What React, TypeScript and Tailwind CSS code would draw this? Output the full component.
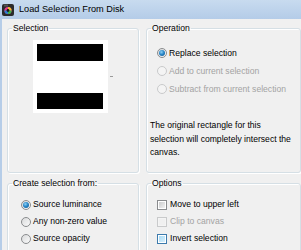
import React from "react";

const font = { fontFamily: '"Liberation Sans", Arial, sans-serif' };

const Radio = ({ checked, disabled }: { checked?: boolean; disabled?: boolean }) => (
	<div
		className={`w-[10px] h-[10px] rounded-full border flex items-center justify-center shrink-0 ${
			disabled
				? "border-[#c9cacb] bg-[#f4f4f4]"
				: "border-[#8a8c8e] bg-gradient-to-br from-[#d9dadb] to-[#fbfbfb]"
		}`}
	>
		{checked && (
			<div className="w-[6px] h-[6px] rounded-full bg-[radial-gradient(circle_at_40%_35%,#8fd0f5_0%,#2a88c8_45%,#0d4f8c_100%)]" />
		)}
	</div>
);

const Check = ({ disabled, hot }: { disabled?: boolean; hot?: boolean }) => (
	<div
		className={`w-[10px] h-[10px] border shrink-0 p-[1px] ${
			hot
				? "border-[#3d7bad] bg-white"
				: disabled
					? "border-[#c9cacb] bg-[#f4f4f4]"
					: "border-[#8a8c8e] bg-white"
		}`}
	>
		<div
			className={`w-full h-full ${
				hot
					? "bg-gradient-to-br from-[#a9dcf6] to-[#d8effb]"
					: disabled
						? "bg-[#f0f0f0]"
						: "bg-gradient-to-br from-[#cbcccd] to-[#f2f2f2]"
			}`}
		/>
	</div>
);

const Legend = ({ children }: { children: React.ReactNode }) => (
	<legend className="ml-[4px] px-[1px] leading-[12px] text-[8.6px] text-black">{children}</legend>
);

const box =
	"border border-[#d5dfe5] rounded-[3px] shadow-[inset_1px_1px_0_#ffffff,1px_1px_0_#ffffff] px-0 pb-0";

export default function App() {
	return (
		<div style={font} className="w-[301px] h-[250px] overflow-hidden bg-[#f0f0f0] flex flex-col">
			{/* title bar */}
			<div className="h-[19px] shrink-0 bg-gradient-to-b from-[#c8dbef] to-[#b4cce8] flex items-center pl-[2px] gap-[5px]">
				<svg width="12" height="12" viewBox="0 0 12 12">
					<rect x="0" y="0" width="12" height="12" rx="2" fill="#2b2b2b" />
					<rect x="2" y="0.5" width="4" height="2" fill="#555" />
					<circle cx="6" cy="6.5" r="3.6" fill="#e23a8a" />
					<path d="M6 6.5 L6 2.9 A3.6 3.6 0 0 1 9.6 6.5 Z" fill="#f2c12e" />
					<path d="M6 6.5 L9.6 6.5 A3.6 3.6 0 0 1 6 10.1 Z" fill="#3ab54a" />
					<path d="M6 6.5 L6 10.1 A3.6 3.6 0 0 1 2.4 6.5 Z" fill="#2a7fd4" />
					<circle cx="6" cy="6.5" r="1.4" fill="#1a1a1a" />
				</svg>
				<span className="text-[9.2px] text-black">Load Selection From Disk</span>
			</div>
			<div className="flex-1 border-l-2 border-[#b6cde8] pl-[5px]">
				<div className="grid grid-cols-[132px_155px] gap-x-[7px]">
					<fieldset className={`${box} mt-[3px] h-[151px]`}>
						<Legend>Selection</Legend>
						<div className="flex items-center mt-[6px] ml-[25px]">
							<div className="w-[75px] h-[73px] bg-white flex flex-col justify-between px-[4px] py-[4px]">
								<div className="h-[17px] w-[66px] bg-black" />
								<div className="h-[16px] w-[66px] bg-black" />
							</div>
							<div className="ml-[2px] w-[3px] h-[1px] bg-[#9a9a9a]" />
						</div>
					</fieldset>
					<fieldset className={`${box} mt-[3px] h-[151px]`}>
						<Legend>Operation</Legend>
						<div className="mt-[10px] pl-[10px] flex flex-col text-[8.6px]">
							<div className="h-[18px] flex items-center gap-[2px]">
								<Radio checked />
								<span className="text-black">Replace selection</span>
							</div>
							<div className="h-[18px] flex items-center gap-[2px]">
								<Radio disabled />
								<span className="text-[#a3a3a3]">Add to current selection</span>
							</div>
							<div className="h-[18px] flex items-center gap-[2px]">
								<Radio disabled />
								<span className="text-[#a3a3a3]">Subtract from current selection</span>
							</div>
						</div>
						<p className="mt-[21px] pl-[3px] pr-[2px] text-[8.6px] leading-[13.5px] text-black">
							The original rectangle for this
							<br />
							selection will completely intersect the
							<br />
							canvas.
						</p>
					</fieldset>
					<fieldset className={`${box} mt-[4px] h-[80px]`}>
						<Legend>Create selection from:</Legend>
						<div className="mt-[7px] pl-[13px] flex flex-col text-[8.6px] text-black">
							<div className="h-[17px] flex items-center gap-[2px]">
								<Radio checked />
								<span>Source luminance</span>
							</div>
							<div className="h-[17px] flex items-center gap-[2px]">
								<Radio />
								<span>Any non-zero value</span>
							</div>
							<div className="h-[17px] flex items-center gap-[2px]">
								<Radio />
								<span>Source opacity</span>
							</div>
						</div>
					</fieldset>
					<fieldset className={`${box} mt-[4px] h-[80px]`}>
						<Legend>Options</Legend>
						<div className="mt-[7px] pl-[10px] flex flex-col text-[8.6px]">
							<div className="h-[17px] flex items-center gap-[3px]">
								<Check />
								<span className="text-black">Move to upper left</span>
							</div>
							<div className="h-[17px] flex items-center gap-[3px]">
								<Check disabled />
								<span className="text-[#a3a3a3]">Clip to canvas</span>
							</div>
							<div className="h-[17px] flex items-center gap-[3px]">
								<Check hot />
								<span className="text-black">Invert selection</span>
							</div>
						</div>
					</fieldset>
				</div>
			</div>
		</div>
	);
}
